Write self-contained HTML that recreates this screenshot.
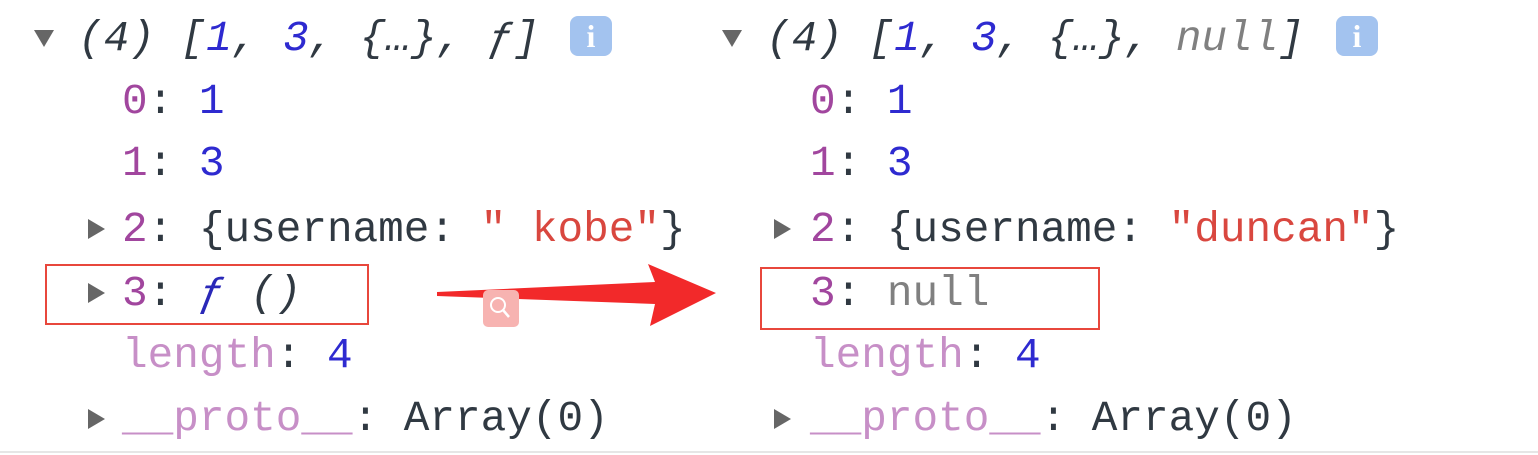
<!DOCTYPE html>
<html><head><meta charset="utf-8"><style>
html,body{margin:0;padding:0;background:#fff;width:1538px;height:455px;overflow:hidden;position:relative}
.l{position:absolute;font-family:"Liberation Mono","DejaVu Sans Mono",monospace;font-size:42.7px;line-height:63px;white-space:pre;color:#303942}
.k{color:#a1469e}.d{color:#c78fc7}.n{color:#2e2ad0}.s{color:#d9473f}.g{color:#808080}.i{font-style:italic}
.tri{position:absolute;width:0;height:0}
.tr{border-top:10px solid transparent;border-bottom:10px solid transparent;border-left:17px solid #666}
.td{border-left:10px solid transparent;border-right:10px solid transparent;border-top:17px solid #666}
.box{position:absolute;border:2px solid #e8473c}
.info{position:absolute;width:42px;height:40px;background:#a3c3ef;border-radius:8px;color:#fff;font:bold 32px "Liberation Serif",serif;text-align:center;line-height:40px}
</style></head><body>
<div class="tri td" style="left:34px;top:30px"></div>
<div class="l i" style="left:78px;top:7px">(4) [<span class="n">1</span>, <span class="n">3</span>, {…}, ƒ]</div>
<div class="info" style="left:570px;top:16px">i</div>
<div class="l" style="left:122px;top:70px"><span class="k">0</span>: <span class="n">1</span></div>
<div class="l" style="left:122px;top:132px"><span class="k">1</span>: <span class="n">3</span></div>
<div class="tri tr" style="left:88px;top:219px"></div>
<div class="l" style="left:122px;top:198px"><span class="k">2</span>: {username: <span class="s">" kobe"</span>}</div>
<div class="box" style="left:45px;top:264px;width:320px;height:57px"></div>
<div class="tri tr" style="left:88px;top:283px"></div>
<div class="l" style="left:122px;top:262px"><span class="k">3</span>: <span class="i" style="color:#2a28b8">ƒ</span> <span class="i">()</span></div>
<div class="l" style="left:122px;top:324px"><span class="d">length</span>: <span class="n">4</span></div>
<div class="tri tr" style="left:88px;top:409px"></div>
<div class="l" style="left:122px;top:387px"><span class="d">__proto__</span>: Array(0)</div>

<div class="tri td" style="left:722px;top:30px"></div>
<div class="l i" style="left:766px;top:7px">(4) [<span class="n">1</span>, <span class="n">3</span>, {…}, <span class="g">null</span>]</div>
<div class="info" style="left:1336px;top:16px">i</div>
<div class="l" style="left:810px;top:70px"><span class="k">0</span>: <span class="n">1</span></div>
<div class="l" style="left:810px;top:132px"><span class="k">1</span>: <span class="n">3</span></div>
<div class="tri tr" style="left:774px;top:219px"></div>
<div class="l" style="left:810px;top:198px"><span class="k">2</span>: {username: <span class="s">"duncan"</span>}</div>
<div class="box" style="left:760px;top:267px;width:336px;height:59px"></div>
<div class="l" style="left:810px;top:262px"><span class="k">3</span>: <span class="g">null</span></div>
<div class="l" style="left:810px;top:324px"><span class="d">length</span>: <span class="n">4</span></div>
<div class="tri tr" style="left:774px;top:409px"></div>
<div class="l" style="left:810px;top:387px"><span class="d">__proto__</span>: Array(0)</div>

<svg style="position:absolute;left:0;top:0" width="1538" height="455">
<polygon points="437,292 655,282 648,264 716,293 650,326 655,304 437,296" fill="#f2292a"/>
<rect x="483" y="290" width="36" height="37" rx="5" fill="#f7b3b1"/>
<circle cx="498" cy="305" r="7" fill="none" stroke="#fff" stroke-width="2"/>
<line x1="503" y1="310" x2="509" y2="317" stroke="#fff" stroke-width="2.5"/>
<line x1="0" y1="452" x2="1538" y2="452" stroke="#e6e6e6" stroke-width="2"/>
</svg>
</body></html>
